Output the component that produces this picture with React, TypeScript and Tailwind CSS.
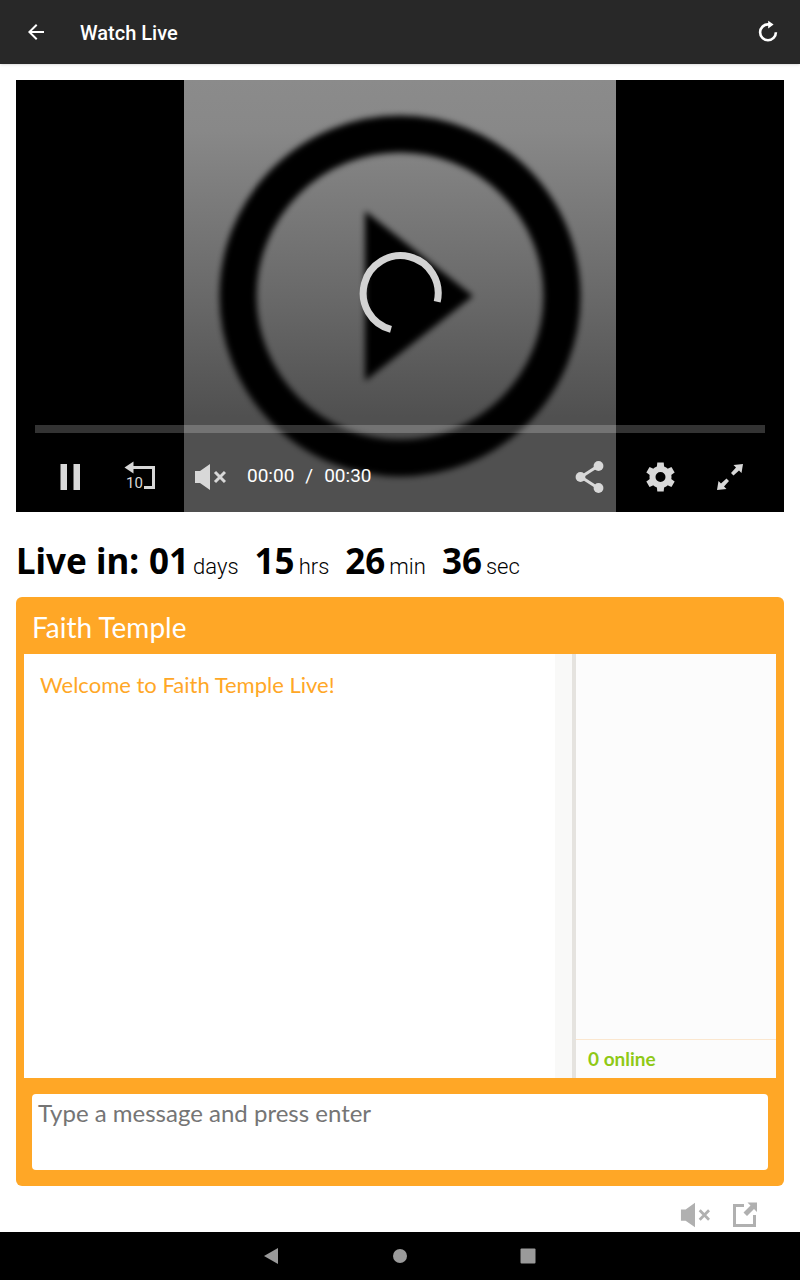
import { useState } from "react";
import type { ReactNode } from "react";

type IconButtonProps = {
  label: string;
  className?: string;
  children: ReactNode;
  onClick?: () => void;
};

const IconButton = ({ label, className = "", children, onClick }: IconButtonProps) => (
  <button
    type="button"
    aria-label={label}
    onClick={onClick}
    className={`flex shrink-0 items-center justify-center ${className}`}
  >
    {children}
  </button>
);

const countdown = [
  { value: "01", unit: "days" },
  { value: "15", unit: "hrs" },
  { value: "26", unit: "min" },
  { value: "36", unit: "sec" },
];

const gearTeeth = [0, 60, 120, 180, 240, 300];

function Header() {
  return (
    <header className="relative z-10 flex h-16 items-center bg-[#282828] px-3 text-white shadow-sm">
      <IconButton label="Back" className="h-12 w-12">
        <svg width="24" height="24" viewBox="0 0 24 24" fill="currentColor">
          <path d="M20 11H7.83l5.59-5.59L12 4l-8 8 8 8 1.41-1.41L7.83 13H20v-2z" />
        </svg>
      </IconButton>
      <h1 className="ml-5 grow pt-0.5 font-['Roboto',sans-serif] text-xl font-medium">Watch Live</h1>
      <IconButton label="Reload" className="h-10 w-10">
        <svg width="24" height="24" viewBox="0 0 24 24">
          <path d="M19.9 12.300a7.900 7.900 0 1 1-7.900-7.900h1.600" fill="none" stroke="currentColor" strokeWidth="2.6" />
          <path d="M12.200 0.800v7.600l5.400-3.800z" fill="currentColor" />
        </svg>
      </IconButton>
    </header>
  );
}

function Poster() {
  return (
    <svg className="absolute inset-0 h-full w-full" viewBox="0 0 432 432">
      <defs>
        <linearGradient id="shade" x1="0" y1="0" x2="0" y2="1">
          <stop offset="0" stopColor="#8b8b8b" />
          <stop offset="0.12" stopColor="#888888" />
          <stop offset="0.5" stopColor="#696969" />
          <stop offset="0.78" stopColor="#505050" />
          <stop offset="1" stopColor="#505050" />
        </linearGradient>
        <filter id="soft" x="-10%" y="-10%" width="120%" height="120%">
          <feGaussianBlur stdDeviation="3" />
        </filter>
      </defs>
      <rect width="432" height="432" fill="url(#shade)" />
      <g filter="url(#soft)">
        <circle cx="216" cy="216" r="162" fill="none" stroke="#000" strokeWidth="37" />
        <path d="M181 131v170l108-85z" />
      </g>
      {/* loading spinner */}
      <path
        d="M253.2 221.7A37.5 37.5 0 1 0 207 249.4"
        fill="none"
        stroke="#d3d3d3"
        strokeWidth="7"
      />
    </svg>
  );
}

const Speaker = ({ size }: { size: number }) => (
  <svg width={size} height={size} viewBox="0 0 32 32">
    <path d="M1 10h5l10-7v26l-10-7H1z" fill="currentColor" />
    <path d="M21 11l10 10m0-10l-10 10" stroke="currentColor" strokeWidth="3" />
  </svg>
);

function Player() {
  return (
    <section aria-label="Video" className="relative aspect-video bg-black">
      <Poster />
      <div className="absolute inset-x-0 bottom-0 px-[19px] text-[#d8d8d8]">
        <div className="h-2 bg-white/20" />
        <div className="flex items-center pt-2">
          <IconButton label="Pause" className="h-[71px] w-[70px]">
            <svg width="32" height="32" viewBox="0 0 32 32" fill="currentColor">
              <path d="M6.500 3H13v26H6.500zM19.500 3H26v26h-6.500z" />
            </svg>
          </IconButton>
          <IconButton label="Back 10 seconds" className="h-[71px] w-[70px]">
            <svg width="32" height="32" viewBox="0 0 32 32">
              <path d="M8 6.500h21.500v20H20" fill="none" stroke="currentColor" strokeWidth="3" />
              <path d="M0.500 6.500l9-6v12z" fill="currentColor" />
              <text x="2" y="27" fontSize="15" fill="currentColor" className="font-['Roboto',sans-serif]">
                10
              </text>
            </svg>
          </IconButton>
          <IconButton label="Unmute" className="h-[71px] w-[70px]">
            <Speaker size={32} />
          </IconButton>
          <p className="flex grow gap-[11px] pl-0.5 font-['Roboto',sans-serif] text-[19px] text-white">
            <span>00:00</span>
            <span>/</span>
            <span>00:30</span>
          </p>
          <IconButton label="Share" className="h-[71px] w-[70px]">
            <svg width="32" height="32" viewBox="0 0 32 32" fill="currentColor">
              <path d="M24 5L7 16l17 11" fill="none" stroke="currentColor" strokeWidth="3" />
              <circle cx="24.500" cy="5" r="4.900" />
              <circle cx="6.500" cy="16" r="4.900" />
              <circle cx="24.500" cy="27" r="4.900" />
            </svg>
          </IconButton>
          <IconButton label="Settings" className="h-[71px] w-[70px]">
            <svg width="32" height="32" viewBox="-16.500 -16 32 32" fill="currentColor">
              <circle r="8" fill="none" stroke="currentColor" strokeWidth="6" />
              {gearTeeth.map((angle) => (
                <path key={angle} d="M-3.200-14.500h6.400l.6 6h-7.600z" transform={`rotate(${angle})`} />
              ))}
            </svg>
          </IconButton>
          <IconButton label="Fullscreen" className="h-[71px] w-[70px]">
            <svg width="32" height="32" viewBox="0 0 32 32" fill="currentColor">
              <path d="M29 3l-1.500 9-2.500-2.500-5.500 5-2.500-2.500 5-5.500L19.500 4zM3 29l1.500-9L7 22.500l5.500-5L15 20l-5 5.500 2.500 2.500z" />
            </svg>
          </IconButton>
        </div>
      </div>
    </section>
  );
}

function Countdown() {
  return (
    <div className="flex items-baseline whitespace-nowrap pt-6 pb-3 font-['Noto_Sans',sans-serif] text-[35px] leading-[49px] text-black">
      <span className="mr-2.5 font-bold">Live in:</span>
      {countdown.map(({ value, unit }) => (
        <span key={unit} className="mr-4 flex items-baseline gap-1">
          <span className="font-bold">{value}</span>
          <span className="font-['Roboto',sans-serif] text-[22px] leading-none font-light">{unit}</span>
        </span>
      ))}
    </div>
  );
}

function Chat() {
  const [message, setMessage] = useState("");

  return (
    <section className="flex grow flex-col rounded-md bg-[#ffa726] px-2 pb-4 font-['Lato',sans-serif]">
      <h2 className="px-2 pt-3 pb-2 text-[28px] leading-[37px] text-white">Faith Temple</h2>
      <div className="flex grow bg-white">
        <p className="grow p-4 text-[22px] leading-[30px] text-[#ffa726]">Welcome to Faith Temple Live!</p>
        <div className="w-[17px] bg-[#f9f9f8]" />
        <aside className="flex w-[204px] flex-col justify-end border-l-4 border-[#e5e3df] bg-[#fcfcfc]">
          <p className="border-t border-[#fbe7cf] px-3 py-2 text-[19px] leading-[22px] font-bold text-[#8fc916]">
            0 online
          </p>
        </aside>
      </div>
      <textarea
        aria-label="Message"
        rows={2}
        value={message}
        onChange={(e) => setMessage(e.target.value)}
        placeholder="Type a message and press enter"
        className="mx-2 mt-4 block h-[76px] resize-none rounded bg-white px-[6px] py-1 text-[24px] leading-[30px] text-[#444] outline-none placeholder:text-[#757575]"
      />
    </section>
  );
}

function SystemBar() {
  return (
    <nav className="flex h-12 items-center justify-center gap-20 bg-black text-[#9a9a9a]">
      <IconButton label="System back" className="h-12 w-12">
        <svg width="16" height="18" viewBox="0 0 16 18" fill="currentColor">
          <path d="M0 9L14 1v16z" />
        </svg>
      </IconButton>
      <IconButton label="Home" className="h-12 w-12">
        <svg width="16" height="16" viewBox="0 0 16 16" fill="currentColor">
          <circle cx="8" cy="8" r="7" />
        </svg>
      </IconButton>
      <IconButton label="Recent apps" className="h-12 w-12">
        <svg width="16" height="16" viewBox="0 0 16 16" fill="currentColor">
          <rect x="0.500" y="0.500" width="15" height="15" rx="1" />
        </svg>
      </IconButton>
    </nav>
  );
}

export default function App() {
  return (
    <div className="flex min-h-screen flex-col bg-white">
      <Header />
      <main className="flex grow flex-col px-4 pt-4">
        <Player />
        <Countdown />
        <Chat />
        <div className="flex h-[46px] items-center justify-end gap-5 pt-3 pr-[26px] text-[#b0b0b0]">
          <IconButton label="Mute chat">
            <Speaker size={30} />
          </IconButton>
          <IconButton label="Open chat in new window">
            <svg width="28" height="28" viewBox="0 0 28 28">
              <path d="M14 4.500H4.500v20h20V14" fill="none" stroke="currentColor" strokeWidth="3" />
              <path d="M17.500 1.500H27V11l-3-3-7 7-3.500-3.500 7-7z" fill="currentColor" />
            </svg>
          </IconButton>
        </div>
      </main>
      <SystemBar />
    </div>
  );
}
